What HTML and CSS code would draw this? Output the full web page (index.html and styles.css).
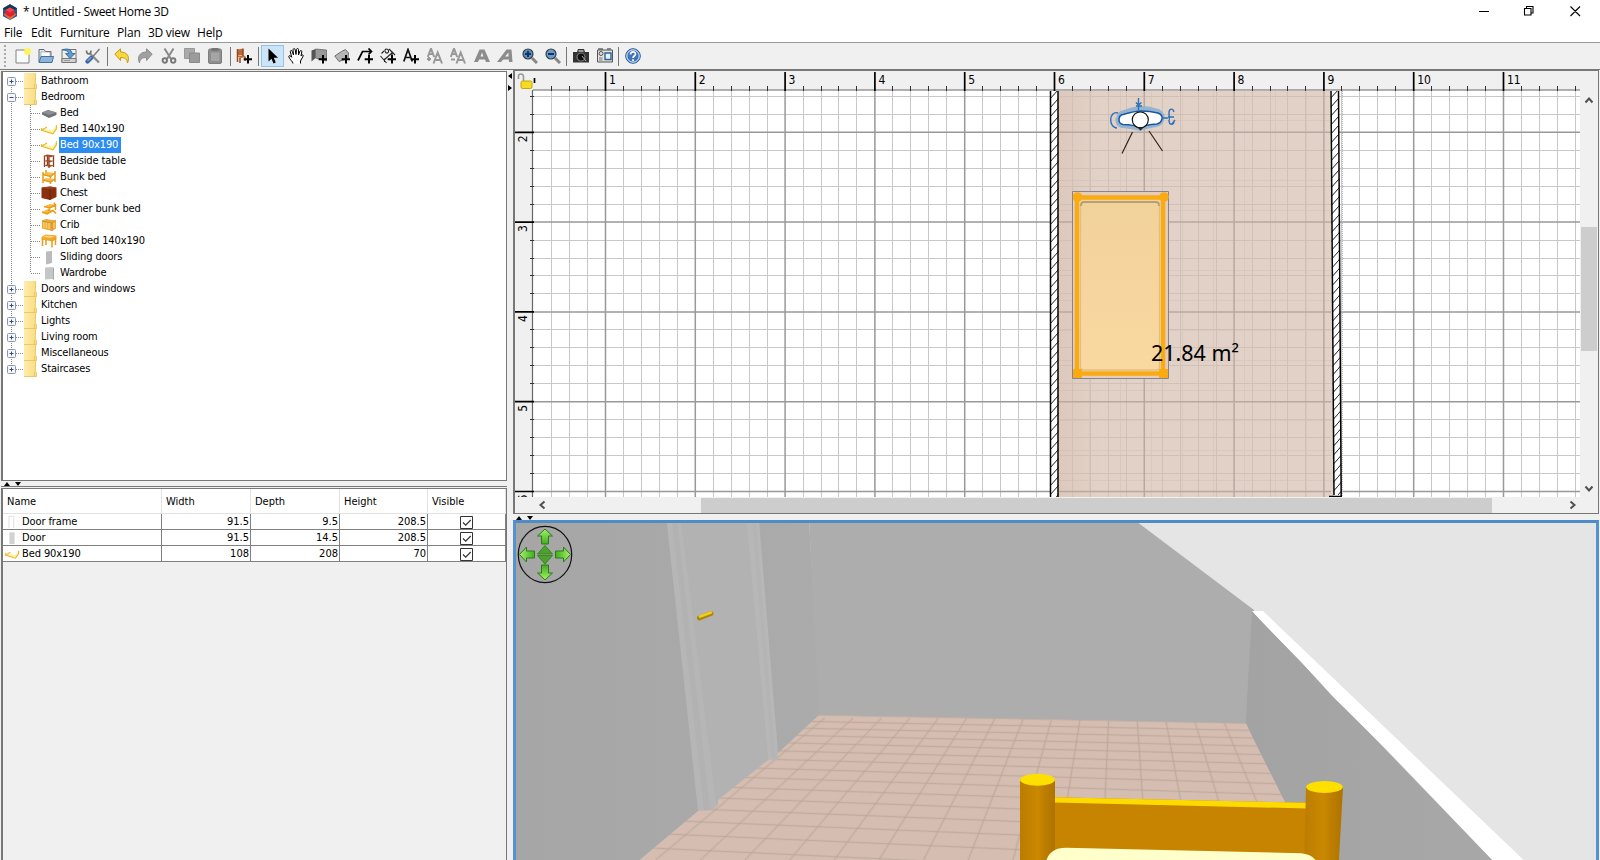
FILE: index.html
```html
<!DOCTYPE html>
<html lang="en">
<head>
<meta charset="utf-8">
<title>* Untitled - Sweet Home 3D</title>
<link rel="stylesheet" href="styles.css">
</head>
<body>
<svg class="defs" width="0" height="0">
  <defs>
    <linearGradient id="folderFill" x1="0" x2="1"><stop offset="0" stop-color="#ffedab"/><stop offset="1" stop-color="#f8dc80"/></linearGradient>
    <linearGradient id="arrowFill" x1="0" y1="0" x2="0" y2="1"><stop offset="0" stop-color="#a5f06a"/><stop offset="1" stop-color="#3fae1c"/></linearGradient>
    <symbol id="i-folder" viewBox="0 0 13 16"><path d="M0 0h11.5v10.500l1 .8V16H0z" fill="url(#folderFill)"/><path d="M11.500 0v10.500l1 .8v4.200H0M10.500 15.500v-4.200" fill="none" stroke="#e3c25c" stroke-width=".8"/></symbol>
    <symbol id="i-bedthin" viewBox="0 0 16 16"><path d="M.5 7.500 12 9l3.300-4.500v3L12.300 13 .5 9z" fill="#fff3a8"/><path d="M.5 7v2.300l11.500 3.500 3.500-5.300V4.300M1 9l5-3" fill="none" stroke="#e8b92c" stroke-width="1.300"/></symbol>
    <symbol id="i-plus" viewBox="0 0 16 16"><path d="M12 7v8.500M7.700 11.200h8.500" stroke="#000" stroke-width="2"/></symbol>
    <symbol id="i-check" viewBox="0 0 13 13"><path d="M.5.5h12v12H.5z" fill="#fff" stroke="#333"/><path d="m3 6.500 2.700 2.700L10.700 4" fill="none" stroke="#333" stroke-width="1.200"/></symbol>
  </defs>
</svg>

<div class="window">
  <header class="titlebar">
    <svg class="logo" viewBox="0 0 16 16"><path d="M8 .3l7 4v8l-7 3.700-7-3.700v-8z" fill="#1d5c96"/><path d="M8 .3l7 4-2.500 2L8 3.500 3.500 6.300 1 4.300z" fill="#12375f"/><path d="M1.500 10.500 8 15.700l6.500-5.200-2-1.500h-9z" fill="#ef6a35"/><path d="M8 3.500l4.500 2.500v4.500L8 13l-4.500-2.500V6z" fill="#e0222c"/><path d="m8 3.500 4.500 2.500L8 8.500 3.500 6z" fill="#f0484c"/></svg>
    <span class="title">* Untitled - Sweet Home 3D</span>
    <svg class="winbtns" viewBox="0 0 136 20"><path d="M3 9.500h10M48.500 6.500h6.500v6.500h-6.500zM50.500 6.500v-2h6.500V11h-2M94.500 4.500l9.500 9.500M104 4.500 94.500 14" fill="none" stroke="#000" stroke-width="1.100"/></svg>
  </header>
  <nav class="menubar"><span style="width:27px">File</span><span style="width:29px">Edit</span><span class="tight" style="width:57px">Furniture</span><span style="width:31px">Plan</span><span class="tight" style="width:49px">3D view</span><span>Help</span></nav>

  <div class="toolbar">
    <i class="grip"></i>
    <div class="group">
      <button><svg viewBox="0 0 16 16"><path d="M1 2h13v13H1z" fill="#fafafa" stroke="#777" stroke-width=".9"/><circle cx="12.500" cy="3.500" r="3.500" fill="#fff35c"/></svg></button>
      <button><svg viewBox="0 0 16 16"><path d="M1 14V1.500h5l1.500 2H13V10z" fill="#dfe3e8" stroke="#5d6e85"/><path d="M3 4h9v5H3z" fill="#fff" stroke="#888" stroke-width=".6"/><path d="M1 14.500 3 8.500h12.500L14 14.500z" fill="#8fb4dc" stroke="#41719f"/></svg></button>
      <button><svg viewBox="0 0 16 16"><path d="M1 1.500h14v13H1z" fill="#eee" stroke="#777"/><path d="M1 10.500h14v4H1z" fill="#d2d2d2" stroke="#777"/><path d="M3 12.500h6" stroke="#999"/><path d="M1.500 2C6 0 10.500 1 11 5.500h3L9 10.500 4.500 5.500h3C7.500 3.500 5 2 1.500 2z" fill="#5f9acb" stroke="#285f93" stroke-width=".8"/></svg></button>
      <button><svg viewBox="0 0 16 16"><path d="M5 5.500l9 9" stroke="#8b8b8b" stroke-width="2.200"/><path d="M1.500 2.500c0 4.500 4.500 4.500 4.500 0" fill="none" stroke="#777" stroke-width="1.700"/><path d="m14.500 1-7 8" stroke="#777" stroke-width="1.400"/><path d="m6 10-3.500 3.500" stroke="#3a67a8" stroke-width="4.200" stroke-linecap="round"/><path d="m6 9.500-3 3" stroke="#86a9d6" stroke-width="1.200" stroke-linecap="round"/></svg></button>
    </div>
    <i class="sep"></i>
    <div class="group">
      <button><svg viewBox="0 0 16 16"><path d="M.8 6 6.500.8V4c7 0 9.500 5 7 11-.5-4-2.500-5.500-7-5.500v3z" fill="#f7d843" stroke="#c99a13"/></svg></button>
      <button><svg viewBox="0 0 16 16"><path d="M15.200 6 9.500.8V4c-7 0-9.500 5-7 11 .5-4 2.500-5.500 7-5.500v3z" fill="#a0a0a0" stroke="#8d8d8d"/></svg></button>
      <button><svg viewBox="0 0 16 16"><path d="M3.500.5 10 11M12.500.5 6 11" stroke="#8a8a8a" stroke-width="2"/><circle cx="3.800" cy="12.500" r="2.200" fill="none" stroke="#777" stroke-width="1.900"/><circle cx="12.200" cy="12.500" r="2.200" fill="none" stroke="#777" stroke-width="1.900"/></svg></button>
      <button><svg viewBox="0 0 16 16"><path d="M.5.500h10v10H.5z" fill="#aaa" stroke="#999"/><path d="M5.500 5h10v9.500h-10z" fill="#9b9b9b" stroke="#8a8a8a"/></svg></button>
      <button><svg viewBox="0 0 16 16"><rect x="1.500" y="1" width="13" height="14.500" rx="1.500" fill="#8e8e8e" stroke="#7e7e7e"/><path d="M4.500 0h7v3h-7z" fill="#777"/><path d="M4 4.500h8.500V13H4z" fill="#a5a5a5"/></svg></button>
    </div>
    <i class="sep"></i>
    <div class="group"><button><svg viewBox="0 0 16 16"><path d="M1.500 1.500 7 .8V7l-5.500.5zM1.500 8 8 7.500l2 1.500-6 1z" fill="#bf6a34"/><path d="M1.500 1v13M4 10v5M7 .5V8M9 9v4" fill="none" stroke="#98481b" stroke-width="1.500"/><use href="#i-plus"/></svg></button></div>
    <i class="sep"></i>
    <div class="group tools">
      <button class="on"><svg viewBox="0 0 16 16"><path d="M3.500.5v13l3-2.800 2 4.800 2.300-1-2-4.700H13z" fill="#000"/></svg></button>
      <button><svg viewBox="0 0 16 16"><path d="M5 15.500c0-2-3.500-4-4.300-7 .5-1.700 2-.5 3 .8L2.300 3.500c.2-1.500 1.700-1.200 2 0L5.500 7 5 1.700c.3-1.600 2-1.400 2.200 0L8 6.500l.5-5.200c.5-1.300 2-1 2 .3L10.500 7l1.500-4c.8-1 2-.4 1.800.7L13 8c1.500-2 2.500-1 2.200 0L12.500 13v2.500" fill="#fff" stroke="#000"/></svg></button>
      <button><svg viewBox="0 0 16 16"><path d="M.5 2.500 4.500 1v9L.500 13.500z" fill="#555"/><path d="M4.500 1 15.500 2v11L4.500 10z" fill="#999" stroke="#666" stroke-width=".8"/><use href="#i-plus"/></svg></button>
      <button><svg viewBox="0 0 16 16"><path d="M.8 8 7.500 3.500l4-2 3 3.500-.5 6-5 1-4 1.500z" fill="#b5b5b5" stroke="#6e6e6e"/><use href="#i-plus"/></svg></button>
      <button><svg viewBox="0 0 16 16"><path d="M1 12.500 5.500 3.500H15M11.500.5l3 3-3 3" fill="none" stroke="#000" stroke-width="1.700"/><use href="#i-plus"/></svg></button>
      <button><svg viewBox="0 0 16 16"><path d="m.5 8 6 7M9 1l6 6M4 12l9-8M1.500 5.500 4 3M6.500 1c-3 0-1 5 1 4 2-.8 1-4-1-4M4.500 14v-3.500M12 7V3.500" fill="none" stroke="#222" stroke-width="1.100"/><use href="#i-plus"/></svg></button>
      <button><svg viewBox="0 0 16 16"><path d="M.8 13.500 5 1.500l4.300 12M2.500 9.500h5" fill="none" stroke="#111" stroke-width="1.700"/><use href="#i-plus"/></svg></button>
    </div>
    <div class="group styles">
      <button><svg viewBox="0 0 16 16"><path d="M.8 9 4 .500 7.200 9M2 6h4M6.500 15.500 10.700 4.500 15 15.500M8 12h5.500M0 11h4M2 9v4" fill="none" stroke="#999" stroke-width="2"/></svg></button>
      <button><svg viewBox="0 0 16 16"><path d="M.8 9 4 .500 7.200 9M2 6h4M6.500 15.500 10.700 4.500 15 15.500M8 12h5.500M1 11.500h4" fill="none" stroke="#999" stroke-width="2"/></svg></button>
      <button><svg viewBox="0 0 16 16"><path d="M0 14 5.500 1.500h5L16 14h-4l-1-2.500H5L4 14zM6.500 8.500h3L8 4.500z" fill="#8c8c8c" fill-rule="evenodd"/></svg></button>
      <button><svg viewBox="0 0 16 16"><path d="M0 14 9.500 1.500h5L15.500 14h-3.500l-.2-2.500H6.300L4 14zM8 8.500h3.500V4.500z" fill="#8c8c8c" fill-rule="evenodd"/></svg></button>
      <button class="shift"><svg viewBox="0 0 16 16"><path d="m10 10 5 5" stroke="#888" stroke-width="3"/><circle cx="6" cy="6" r="5" fill="#5f8dbc" stroke="#35424f" stroke-width="1.200"/><path d="M6 3v6M3 6h6" stroke="#12375f" stroke-width="2"/></svg></button>
      <button><svg viewBox="0 0 16 16"><path d="m10 10 5 5" stroke="#888" stroke-width="3"/><circle cx="6" cy="6" r="5" fill="#6d9ac9" stroke="#35424f" stroke-width="1.200"/><path d="M3 6h6" stroke="#12375f" stroke-width="2"/></svg></button>
    </div>
    <i class="sep"></i>
    <div class="group last">
      <button><svg viewBox="0 0 16 16"><path d="M0 4h4l1-3h6l1 3h4v10.500H0z" fill="#333"/><path d="M5.500 2h5v2h-5z" fill="#999"/><circle cx="8" cy="9" r="4" fill="#111" stroke="#777" stroke-width="1.200"/><path d="M9 8l4 5" stroke="#aaa"/></svg></button>
      <button><svg viewBox="0 0 16 16"><path d="M.5 2h15v12H.5z" fill="#e3e3dc" stroke="#555"/><path d="M1 1h5M10 1h4" stroke="#666" stroke-width="1.500"/><circle cx="4" cy="5.500" r="2" fill="#ddd" stroke="#555"/><path d="M8 5h6v6.500H8z" fill="#e9f2fc" stroke="#2d5f9c" stroke-width="1.400"/><path d="M2 10h3.500M2 12h3.500" stroke="#777"/></svg></button>
    </div>
    <i class="sep"></i>
    <div class="group last"><button><svg viewBox="0 0 16 16"><circle cx="8" cy="8" r="7.300" fill="#3f74bb" stroke="#2a5896"/><circle cx="8" cy="8" r="6.200" fill="none" stroke="#fff" stroke-width=".9"/><path d="M5.500 6.500C5.500 3 10.500 3 10.500 6 10.500 8 8 8 8 10M8 11.200V13" fill="none" stroke="#fff" stroke-width="1.700"/></svg></button></div>
  </div>

  <main class="content">
    <section class="left">
      <div class="catalog" id="catalog"></div>
      <div class="hsplit"><svg viewBox="0 0 20 4"><path d="M0 4 3 0l3 4zM11 0h6l-3 4z"/></svg></div>
      <div class="tablebox">
        <table>
          <colgroup><col style="width:159px"><col style="width:89px"><col style="width:89px"><col style="width:88px"><col style="width:78px"></colgroup>
          <thead><tr><th>Name</th><th>Width</th><th>Depth</th><th>Height</th><th>Visible</th></tr></thead>
          <tbody>
            <tr><td><svg viewBox="0 0 16 16"><path d="M4.500 15V1.500H10V15" fill="#fff" stroke="#ddd"/></svg>Door frame</td><td>91.5</td><td>9.5</td><td>208.5</td><td><svg class="cb"><use href="#i-check"/></svg></td></tr>
            <tr><td><svg viewBox="0 0 16 16"><path d="M5 1.500h6V15H5z" fill="#d2d2d2"/></svg>Door</td><td>91.5</td><td>14.5</td><td>208.5</td><td><svg class="cb"><use href="#i-check"/></svg></td></tr>
            <tr><td><svg><use href="#i-bedthin"/></svg>Bed 90x190</td><td>108</td><td>208</td><td>70</td><td><svg class="cb"><use href="#i-check"/></svg></td></tr>
          </tbody>
        </table>
      </div>
    </section>
    <div class="vsplit"><svg viewBox="0 0 4 20"><path d="M4 0v6L0 3zM0 12l4 3-4 3z"/></svg></div>
    <section class="right">
      <div class="planbox">
        <svg class="plan" id="plan" viewBox="515 71 1065 426"></svg>
        <div class="vscroll"><svg viewBox="0 0 16 12"><path d="m4.500 8.500 3.500-4 3.500 4" /></svg><i></i><svg viewBox="0 0 16 12"><path d="m4.500 3.500 3.500 4 3.500-4"/></svg></div>
        <div class="hscroll"><svg viewBox="0 0 12 16"><path d="M8.500 4.500 4.500 8l4 3.500"/></svg><i></i><svg viewBox="0 0 12 16"><path d="M3.500 4.500l4 3.500-4 3.500"/></svg></div>
        <div class="corner"></div>
      </div>
      <div class="hsplit"><svg viewBox="0 0 20 4"><path d="M0 4 3 0l3 4zM11 0h6l-3 4z"/></svg></div>
      <div class="view3d"><svg id="scene" viewBox="516 523 1081 337"></svg></div>
    </section>
  </main>
</div>
<script src="app.js"></script>
</body>
</html>
```
FILE: styles.css
```css
* { box-sizing: border-box; }
body { margin: 0; background: #fff; font: 11px/16px "DejaVu Sans Condensed", "DejaVu Sans", sans-serif; font-stretch: condensed; color: #000; overflow: hidden; }
.defs { position: absolute; }
.window { width: 1600px; height: 860px; display: flex; flex-direction: column; overflow: hidden; }

.titlebar { height: 23px; display: flex; align-items: center; padding-left: 2px; font: 12px "Open Sans", sans-serif; }
.logo { width: 16px; height: 16px; }
.title { margin-left: 5px; width: 148px; white-space: nowrap; letter-spacing: -.32px; }
.winbtns { width: 136px; height: 20px; margin-left: auto; margin-right: -12px; }
.menubar { height: 19px; display: flex; padding-left: 4px; font: 12px/19px "Open Sans", sans-serif; letter-spacing: -.15px; white-space: nowrap; }
.tight { letter-spacing: -.3px; }

.toolbar { height: 27px; display: flex; align-items: center; background: #f0f0f0; border-top: 1px solid #999; padding-left: 4px; }
.grip { width: 2px; height: 22px; margin-right: 5px; background: repeating-linear-gradient(#aaa 0 2px, transparent 2px 4px); }
.group { display: flex; }
.group button { width: 23.400px; height: 22px; padding: 0; border: 1px solid transparent; background: none; display: flex; align-items: center; justify-content: center; }
.group svg { width: 16px; height: 16px; flex: none; }
.tools button { width: 23px; }
.tools + .styles { margin-left: 1px; }
.group .shift { margin-left: 1px; }
.group .on { background: #cce4f7; border-color: #90c3ec; }
.sep { width: 1px; height: 19px; margin: 0 2px 0 2.500px; background: #777; }
.styles + .sep { margin: 0 3px 0 1px; }
.last + .sep { margin: 0 3px 0 1px; }

.content { flex: 1; min-height: 0; display: flex; background: #f0f0f0; border-top: 1px solid #777; }
.left { width: 508px; padding: 1px 1px 0 1px; display: flex; flex-direction: column; }
.catalog { height: 410px; background: #fff; border: 1px solid #777; border-left-width: 2px; padding: 1px 0 0 3px; }
.hsplit { height: 6px; flex: none; border-bottom: 1px solid #777; padding: 1px 0 0 3px; display: flex; }
.hsplit svg { width: 20px; height: 4px; }
.vsplit { width: 5px; padding-top: 3px; }
.vsplit svg { width: 4px; height: 20px; }

.node { height: 16px; display: flex; align-items: center; white-space: nowrap; }
.node svg { flex: none; }
.gutter { width: 18px; height: 16px; }
.folder { width: 13px; height: 16px; margin-right: 3px; }
.kids { width: 35px; height: 16px; }
.icon { width: 16px; height: 16px; margin-right: 2px; }
.node span { height: 16px; padding: 0 1px; letter-spacing: -.14px; }
.node .selected { background: #2d8cef; color: #fff; padding-right: 3px; }

.tablebox { flex: 1; border: solid #777; border-width: 1px 1px 0 2px; margin-top: 1px; }
table { width: 503px; table-layout: fixed; border-collapse: separate; border-spacing: 0; background: #fff; }
th { height: 25px; font-weight: normal; text-align: left; padding: 2px 0 0 4px; border-right: 1px solid #e2e2e2; border-bottom: 1px solid #e2e2e2; }
td { height: 16px; padding: 0 1px 0 0; text-align: right; border-right: 1px solid #808080; border-bottom: 1px solid #808080; line-height: 14px; overflow: hidden; white-space: nowrap; }
td:first-child { text-align: left; padding-left: 1px; letter-spacing: -.1px; }
td:last-child { text-align: center; }
td svg { width: 16px; height: 14px; margin-right: 2px; vertical-align: top; }
td .cb { width: 13px; height: 13px; margin: 1px 0 0; }

.right { flex: 1; display: flex; flex-direction: column; min-width: 0; }
.planbox { height: 444px; border: 1px solid #777; border-left-width: 2px; display: grid; grid-template-columns: 1065px 1fr; grid-template-rows: 426px 1fr; flex: none; margin-right: 1px; }
.plan { width: 1065px; height: 426px; }
.num { font-size: 12px; }
.plan .area { font-size: 22px; font-family: "Noto Sans", sans-serif; }
.vscroll { display: flex; flex-direction: column; align-items: center; padding: 23px 0 2px; }
.vscroll svg { width: 16px; height: 12px; }
.vscroll i { width: 16px; height: 124px; background: #cdcdcd; margin: 121px 0 auto; }
.hscroll { display: flex; align-items: center; padding: 0 1px 0 21px; }
.hscroll svg { width: 12px; height: 16px; }
.hscroll i { width: 791px; height: 15px; background: #cdcdcd; margin: 0 auto 0 153px; }
.vscroll path, .hscroll path { fill: none; stroke: #505050; stroke-width: 2; }
.right .hsplit { height: 6px; border: 0; padding: 2px 0 0 3px; }
.view3d { flex: 1; min-height: 0; border: solid #5593d0; border-width: 3px 3px 0 3px; border-top-color: #4d8bc9; overflow: hidden; margin-right: 1px; }
.view3d svg { display: block; width: 1081px; height: 337px; }
```
FILE: app.js
```js
// Furniture catalog
const items = [
  ['Bed', '<path d="M1 7.500 7 5l8.500 2.500v2.500L8 13 1 9.500z" fill="#6e7274"/><path d="m1 7.500 6-2.500 8.500 2.500L8 10z" fill="#8c9092"/>'],
  ['Bed 140x190', '<use href="#i-bedthin"/>'],
  ['Bed 90x190', '<use href="#i-bedthin"/>'],
  ['Bedside table', '<path d="M3.500 3v11M12.500 3v11M8 4v11M6.500 2v10" stroke="#8d3f1c" stroke-width="1.300"/><path d="m2 3 4-1.500 8 1-4 1.800zM3 8l3-1 7 .8-4 1.700zM3 12.500l3-1 7 .8-4 1.700z" fill="#a14e26"/>'],
  ['Bunk bed', '<path d="M2 3v11M14 2v11M9.500 5v10M5 1v4" stroke="#e89f22" stroke-width="1.600"/><path d="m2 5 4-2 8 1-4.500 3zM2 10.500l3-1.500 9 1-4.500 3z" fill="#f5bf4c"/><path d="m2 5.500 7.500 2L14 4M2 11l7.500 2 4.500-3" fill="none" stroke="#e39a1b" stroke-width="1.500"/>'],
  ['Chest', '<path d="M.5 2.500 9 1.500l6.500 1V12L9 15 .5 13z" fill="#8a300c"/><path d="m.5 2.500 8.500-1 6.500 1L9 4z" fill="#9c421c"/><path d="M9 4v11" stroke="#67210a"/>'],
  ['Corner bunk bed', '<path d="m3 5.500 6-2.500 5.500 1L9 7zM1 11l6-3 5 1.500L6 13z" fill="#f7b93a"/><path d="M3 5.500 9 7l5.500-3v5M1 11l5 2 6-3.500 3 3M8 7v3M13.500 4V1.500" fill="none" stroke="#e89b14" stroke-width="1.500"/>'],
  ['Crib', '<path d="M1 3.500 5 2l10 1.500v8L11 14 1 11.500z" fill="#e9ab3b"/><path d="M3 5v6M5.500 5v6M8 6v6M13 5v6" stroke="#f9cf72" stroke-width="1.300"/><path d="m1 4 10 2 4-2.500M11 6v8" fill="none" stroke="#d2902a"/>'],
  ['Loft bed 140x190', '<path d="m.5 4 4-2.500 11 1V6l-4 2.500L.5 6.500z" fill="#efa929"/><path d="M1.500 6v7M14.500 5v7M11 7v7.500M5 7v5" stroke="#e69c17" stroke-width="1.500"/><path d="m2 4 3-1.500 8 .8-3 1.700z" fill="#ffd27a"/>'],
  ['Sliding doors', '<path d="M5 2.500 11 2v12l-6 1.500z" fill="#b9bbbc"/>'],
  ['Wardrobe', '<path d="M4 2.500 11.500 2v12l-7.500.500z" fill="#c4c6c8"/><path d="m11.500 2 1.500 1v12l-1.500-1z" fill="#aaa"/>']
];
const folders = ['Bathroom', 'Bedroom', 'Doors and windows', 'Kitchen', 'Lights', 'Living room', 'Miscellaneous', 'Staircases'];
const dots = 'stroke="#888" stroke-dasharray="1 1"';

function folderRow(name, i) {
  const open = name === 'Bedroom';
  const y1 = i === 0 ? 8 : 0, y2 = i === folders.length - 1 ? 8 : 16;
  return `<div class="node"><svg class="gutter" viewBox="0 0 18 16"><path d="M5.500 ${y1}V${y2}M10 8.500h8" ${dots}/><rect x="1.500" y="4.500" width="8" height="8" rx="1" fill="#f4f6f9" stroke="#8a97a8"/><path d="M3.500 8.500h4${open ? '' : 'M5.500 6.500v4'}" stroke="#3c4c78"/></svg><svg class="folder"><use href="#i-folder"/></svg><span>${name}</span></div>`;
}
function itemRow([name, art], i) {
  const y2 = i === items.length - 1 ? 8 : 16;
  return `<div class="node"><svg class="kids" viewBox="0 0 35 16"><path d="M5.500 0v16M24.500 0V${y2}M25 8.500h9" ${dots}/></svg><svg class="icon" viewBox="0 0 16 16">${art}</svg><span class="${name === 'Bed 90x190' ? 'selected' : ''}">${name}</span></div>`;
}
document.getElementById('catalog').innerHTML = folders.map((f, i) =>
  folderRow(f, i) + (f === 'Bedroom' ? items.map(itemRow).join('') : '')).join('');

// Floor plan
const PITCH = 89.8, X1 = 605.5, Y2 = 132.300;
let minor = '', major = '', ticks = '', bold = '', nums = '';
for (let k = -4; k < 55; k++) {
  const x = X1 + k * PITCH / 5;
  if (x < 534 || x > 1580) continue;
  if (k % 5 === 0) {
    major += `M${x} 90V498`; bold += `M${x} 72V91`;
    nums += `<text x="${x + 3.5}" y="84" class="num">${k / 5 + 1}</text>`;
  } else { minor += `M${Math.floor(x) + .5} 90V498`; ticks += `M${Math.floor(x) + .5} 86V91`; }
}
for (let k = -2; k < 21; k++) {
  const y = Y2 + k * PITCH / 5;
  if (k % 5 === 0) {
    major += `M533 ${y}H1580`; bold += `M515 ${y}H534`;
    nums += `<text class="num" transform="translate(527 ${y + 10}) rotate(-90)">${k / 5 + 2}</text>`;
  } else { minor += `M533 ${Math.floor(y) + .5}H1580`; ticks += `M530 ${Math.floor(y) + .5}H534`; }
}
const grid = (a, b) => `<path d="${minor}" stroke="${a}"/><path d="${major}" stroke="${b}" stroke-width="1.500"/>`;
document.getElementById('plan').innerHTML = `
<defs>
  <pattern id="hatch" width="8" height="9" patternUnits="userSpaceOnUse" x="1050"><path d="M-1 10 9-1M-1 1l2-2M7 10l2-2" stroke="#000" stroke-width=".9"/></pattern>
  <pattern id="tile" x="1058" y="90" width="31" height="30" patternUnits="userSpaceOnUse"><rect width="31" height="30" fill="#e3d3c9"/><path d="M0 .5h31M.5 0v30" stroke="#dacabf"/></pattern>
  <linearGradient id="roomShade"><stop offset="0" stop-color="#b88c78" stop-opacity=".16"/><stop offset=".15" stop-color="#c9a797" stop-opacity=".04"/><stop offset="1" stop-color="#c9a797" stop-opacity=".04"/></linearGradient>
  <linearGradient id="bedFill" x2="0" y2="1"><stop offset="0" stop-color="#f2d29b"/><stop offset="1" stop-color="#f9d9a0"/></linearGradient>
  <clipPath id="pc"><path d="M533 91h1047v407H533z"/></clipPath>
</defs>
<path d="M515 71h1065v427H515z" fill="#f0f0f0"/>
<path d="M533 90h1047v408H533z" fill="#fff"/>
${grid('#c8c8c8', '#999')}
<g clip-path="url(#pc)">
  <path d="M1058 90h272l4 408h-276z" fill="url(#tile)"/>
  <path d="M1058 90h272l4 408h-276z" fill="url(#roomShade)"/>
  <svg x="1058" y="90" width="273" height="408" viewBox="1058 90 273 408">${grid('#d0c0b6', '#b8a89f')}</svg>
  <path d="M1050.500 91h8v407h-8z" fill="#fff"/><path d="M1050.500 91h8v407h-8z" fill="url(#hatch)"/>
  <path d="M1050.500 91v407M1058 91v407" stroke="#000" stroke-width="1.500"/>
  <path d="M1330.500 91h8l3 404h-8z" fill="#fff"/><path d="M1330.500 91h8l3 404h-8z" fill="url(#hatch)"/>
  <path d="m1331 91 3 404M1338.500 91l2.700 407M1329 496.500h12" fill="none" stroke="#000" stroke-width="1.500"/>
  <path d="M1342.500 91v407" stroke="#bbb" stroke-dasharray="1 1"/>
</g>
<path d="M1072.500 191.500h96v187h-96z" fill="#e4cdbb" stroke="#8a8290"/>
<path d="M1077 197.500h86v176h-86z" fill="url(#bedFill)" stroke="#fbab12" stroke-width="4.500"/>
<path d="M1080.500 367V205q0-3 3-3h73q3 0 3 3v162q0 3-3 3h-73q-3 0-3-3z" fill="none" stroke="#dcc08c" stroke-width="1.300"/>
<path d="M1081 206q0-4 3-4h72q3 0 3 4" fill="none" stroke="#b5a07c" stroke-width="1.800"/>
<g fill="#fbab12"><circle cx="1077.500" cy="197" r="4.800"/><circle cx="1164" cy="197" r="4.800"/><path d="M1073 369h9v9h-9zM1159 369h9v9h-9z"/></g>
<path d="M1119 120q0-7 5-7.500 12-4 17-4 9 0 17 3 5 3 4 7-1 5-6 6-12 2-16 4-6-2-18-3-4-1-4-5.500z" fill="#fff" stroke="#93b3d2" stroke-width="5"/>
<path d="M1119 120q0-5 4-5.500 12-3.500 18-3.500 9 0 17 2 5 2 4 6-1 4-5 5-12 1-17 3-6-2-17-2.500-4-1-4-4.500z" fill="#fff" stroke="#1d579d" stroke-width="1.500"/>
<circle cx="1140.300" cy="119.800" r="8" fill="#fff" stroke="#111" stroke-width="1.200"/>
<path d="m1137 127 3.500 3.500 3.500-3.500z" fill="#222"/>
<path d="m1132.500 132-10.500 21.500M1149 131l13.500 20" stroke="#33221c" stroke-width="1.200"/>
<path d="M1118 113c-9-3-10 15-1 15M1138.500 98v12M1136 102.500l2.500 2.500 3-2.500M1136 106h6M1163 118h5M1174 112c-1-4-5-4-5 1 0 4 1 6 0 7M1168 117h6M1169 120c0 6 5 5 5 1M1172 124l3-4" fill="none" stroke="#2e70b8" stroke-width="1.400"/>
<text class="area" x="1151" y="361" textLength="88" lengthAdjust="spacingAndGlyphs">21.84 m²</text>
<path d="M533 90H1580M532.500 90V498" stroke="#666" stroke-width="1.200"/>
<path d="${ticks}" stroke="#333"/><path d="${bold}M534.500 78v5" stroke="#000" stroke-width="1.700"/>
${nums}
<path d="M523.500 81v-4q0-3-2.500-3t-2.500 2v3" fill="none" stroke="#999" stroke-width="1.600"/>
<rect x="521" y="81" width="11" height="7.500" rx="1.500" fill="#f5dc22" stroke="#c4a410"/>`;

// 3D view
let across = '', along = '';
for (let n = -2; n < 24; n++) {
  const x = 1222.300 - n * 28.400;
  along += `M${x} 718L${1120 + (x - 1120) * 390 / 248} 860`;
}
for (let y = 715; y < 880; y += 6.600 * Math.pow((y - 470) / 245, 2)) {
  const s = .019 + (y - 715) * .0002;
  across += `M600 ${y + s * (600 - 819)}L1330 ${y + s * 511}`;
}
const arrow = a => `<path d="M545 529l7.500 7h-4v8h-7v-8h-4z" transform="rotate(${a} 545 554.500)" fill="url(#arrowFill)" stroke="#2d7a1b"/>`;
document.getElementById('scene').innerHTML = `
<defs>
  <linearGradient id="lw" gradientUnits="userSpaceOnUse" x1="516" x2="820" y1="0" y2="0"><stop offset="0" stop-color="#a6a6a6"/><stop offset="1" stop-color="#ababab"/></linearGradient>
  <linearGradient id="post"><stop offset="0" stop-color="#bb7c00"/><stop offset=".5" stop-color="#cb8900"/><stop offset=".7" stop-color="#bd7e00"/><stop offset="1" stop-color="#ae7300"/></linearGradient>
  <linearGradient id="rw"><stop offset="0" stop-color="#a3a3a3"/><stop offset="1" stop-color="#a8a8a8"/></linearGradient>
  <clipPath id="floor"><path d="M819 715 1245.600 723.300 1318 868H630L698 811 712 810 718 805V800L768 760H777L778 753z"/></clipPath>
</defs>
<path d="M510 520h1090v340H510z" fill="#e5e5e5"/>
<path d="M510 520H809L821 718 780 870H510z" fill="url(#lw)"/>
<path d="M809 520H1134.500L1254 610 1246 726 819 718z" fill="#adadad"/>
<path d="M1252 611 1500 868H1310L1245.600 723z" fill="url(#rw)"/>
<path d="M1252 611H1263L1532 868H1500L1390 753 1333 696.700 1301 661.700 1267 627z" fill="#fff"/>
<path d="M666.500 520H681L720 804 712 812 698 811z" fill="#b6b6b6"/>
<path d="M672 520h5L710 810h-6z" fill="#b2b2b2"/>
<path d="M681 520H747L768 762 716 804z" fill="#b2b2b2"/>
<path d="M746.500 520H759L778 753 777 761H768z" fill="#b7b7b7"/>
<path d="M752 520h4L775 758h-3z" fill="#b4b4b4"/>
<g clip-path="url(#floor)">
  <path d="M600 700h750v170H600z" fill="#d5beb1"/>
  <g fill="none">
    <path d="${along}" stroke="#c9b4a7" stroke-width="3" opacity=".4"/>
    <path d="${across}" stroke="#c9b4a7" stroke-width="2.500" opacity=".4"/>
    <path d="${along}" stroke="#bba799" opacity=".8"/>
    <path d="${across}" stroke="#bba799" opacity=".7"/>
  </g>
</g>
<path d="M699.500 618 711 613.500" stroke="#aa8611" stroke-width="5" stroke-linecap="round"/><path d="M700 616.500 711 612.500" stroke="#f1ce1c" stroke-width="2.600" stroke-linecap="round"/>
<path d="M1054 797.300 1307 802.700V868H1054z" fill="#c68400"/>
<path d="M1054 797.300 1307 802.700V808.500L1054 802.500z" fill="#fddb00"/>
<path d="M1020 779.500H1055V868H1020z" fill="url(#post)"/><ellipse cx="1037.500" cy="779.800" rx="17.500" ry="6" fill="#fddf00"/>
<path d="M1306 787H1343L1338.500 868H1304z" fill="url(#post)"/><ellipse cx="1324.500" cy="787" rx="18.300" ry="6" fill="#fddf00"/>
<path d="M1046 862Q1049 848 1066 847.700L1301 853.300Q1312 854 1317 862z" fill="#ffffcc"/>
<ellipse cx="545" cy="554.500" rx="26.700" ry="28.200" fill="none" stroke="#111" stroke-width="1.200"/>
${arrow(0)}${arrow(90)}${arrow(180)}${arrow(270)}
<path d="M545 545.500l7.500 8.500h-15zM545 564l7.500-8.500h-15z" fill="#4ca32b" stroke="#2d7a1b" stroke-width=".8"/>`;
```
